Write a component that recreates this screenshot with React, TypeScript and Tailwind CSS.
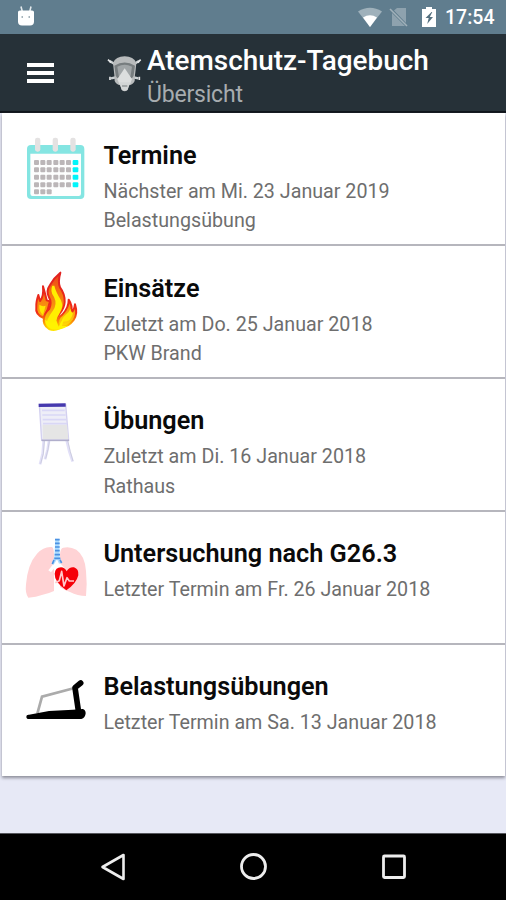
import type { ReactNode } from 'react'

interface Entry {
  title: string
  lines: string[]
  icon: ReactNode
}

function StatusBar() {
  return (
    <div className="flex h-[34px] items-center bg-[#607d8e] text-white">
      <svg className="mb-[2px] ml-[17px] h-[22px] w-[18px]" viewBox="0 0 18 22" fill="none">
        <path d="M4 1.500l1.500 6M14 1.500l-1.500 6" stroke="#e3e9ec" strokeWidth="1.600" />
        <path d="M1 7q0-1.500 2-1.500h12q2 0 2 1.500v9.500q0 4-4 4H5q-4 0-4-4z" fill="#fff" />
        <path d="M4.500 12h1.500M11.500 12h1.500" stroke="#8b9da7" strokeWidth="1.500" />
      </svg>
      <svg className="ml-auto h-[22px] w-[24px]" viewBox="0 0 24 22">
        <path d="M0 5.500Q12-2 24 5.500L12 21z" fill="#9fb1bb" />
        <path d="M5 11.500q7-4.500 14 0L12 21z" fill="#fff" />
      </svg>
      <svg className="ml-[7px] h-[22px] w-[20px]" viewBox="0 0 20 22" fill="none">
        <path d="M8 2h9v15L5 4.500zM3 7l13 13H3z" fill="#8ea2ae" />
        <path d="M1 3l17 17" stroke="#a1b1ba" strokeWidth="1.600" />
      </svg>
      <svg className="ml-[13px] h-[22px] w-[14px]" viewBox="0 0 14 22">
        <path d="M4 1h6v2h4v18H0V3h4z" fill="#fff" />
        <path d="M9.500 6L3.500 12h3.200l-1.500 6 5.800-7H7.800l2.500-5z" fill="#54707f" />
      </svg>
      <span className="ml-[9px] mr-[10px] mt-[2px] w-[51px] whitespace-nowrap text-[19.500px] font-medium leading-6">
        17:54
      </span>
    </div>
  )
}

function MaskIcon() {
  return (
    <svg className="h-[38px] w-[36px]" viewBox="0 0 108 114" fill="none">
      <path d="M8 18l16 10M96 18l-16 10M12 70l20-4M94 70l-20-4" stroke="#cbd0d2" strokeWidth="7" />
      <path d="M3 14l9 9M101 14l-9 9M9 65v10M97 65v10" stroke="#e4e6e7" strokeWidth="5" />
      <path d="M18 24Q26 4 53 4t35 20q-2 22-4 36l-1 18q-4 10-17 13l-5 15q-8 6-16 0l-5-15q-13-3-17-13l-1-18z" fill="#b8bbbc" />
      <path d="M22 32q31-19 62 0l-4 29q-2 9-12 11H38q-10-2-12-11z" fill="#777d7f" />
      <path d="M31 35q22-11 44 0l-4 26q-2 6-8 7H43q-6-1-8-7z" fill="#a0a5a7" />
      <path d="M53 40l22 32-6 16H37l-6-16z" fill="#dcdede" />
      <path d="M36 82h34l-8 22q-9 6-18 0z" fill="#d3d6d6" />
      <path d="M45 93h16" stroke="#999fa1" strokeWidth="5" />
    </svg>
  )
}

function Header() {
  return (
    <header className="flex h-[79px] border-b-2 border-[#10151b] bg-[#263138]">
      <div className="ml-[27px] mt-[29px] flex h-[20px] w-[26.500px] flex-col justify-between">
        <span className="h-[4px] bg-white" />
        <span className="h-[4px] bg-white" />
        <span className="h-[4px] bg-white" />
      </div>
      <div className="ml-[53px] mt-[21px]">
        <MaskIcon />
      </div>
      <div className="ml-[4.500px] mt-[9px] whitespace-nowrap">
        <h1 className="text-[27.900px] font-medium leading-[36px] text-white">Atemschutz-Tagebuch</h1>
        <p className="mt-px text-[23px] leading-[30px] tracking-[-0.2px] text-[#a7acaf]">Übersicht</p>
      </div>
    </header>
  )
}

function CalendarIcon() {
  return (
    <svg className="h-[90px] w-[88px]" viewBox="0 0 264 270">
      <rect x="36" y="60" width="172" height="162" rx="12" fill="#84e5e2" />
      <path d="M46 86h152v120q0 7-7 7H53q-7 0-7-7z" fill="#fdfefe" />
      {[68, 121, 174].map((x) => (
        <rect key={x} x={x - 8} y="38" width="16" height="42" rx="7" fill="#e4e2e2" />
      ))}
      {[113, 135, 157, 180, 201].map((y, row) =>
        [65, 84, 103, 123, 142, 161, 181].map((x, col) =>
          row === 4 && col > 2 ? null : (
            <rect
              key={`${x}-${y}`}
              x={x - 8}
              y={y - 8}
              width={col === 6 ? 17 : 15}
              height="15"
              rx="3"
              fill={col === 6 ? '#00f5fa' : '#bbb6b8'}
            />
          ),
        ),
      )}
    </svg>
  )
}

function FireIcon() {
  return (
    <svg className="h-[90px] w-[88px]" viewBox="0 0 264 270">
      <defs>
        <linearGradient id="flameEdge" x1="0" y1="40" x2="0" y2="218" gradientUnits="userSpaceOnUse">
          <stop offset="0" stopColor="#e02020" />
          <stop offset=".7" stopColor="#f02c18" />
          <stop offset=".9" stopColor="#ffb000" />
          <stop offset="1" stopColor="#ffe600" />
        </linearGradient>
        <linearGradient id="flameFill" x1="0" y1="40" x2="0" y2="218" gradientUnits="userSpaceOnUse">
          <stop offset="0" stopColor="#e83a20" />
          <stop offset=".3" stopColor="#f46a10" />
          <stop offset=".65" stopColor="#f99a10" />
          <stop offset="1" stopColor="#fff000" />
        </linearGradient>
      </defs>
      <g fill="url(#flameFill)" stroke="url(#flameEdge)" strokeWidth="6" strokeLinejoin="round">
        <path d="M86 180Q60 170 64 146q-1-14 6-35l5 18q12-14 9-44 7 24 11 42l10 3-7 25z" />
        <path d="M132 204q-8-22 10-34 20-22 19-45 12 18 8 38 9-7 11-24 9 28-4 47-15 20-32 20z" />
        <path d="M102 213Q82 200 87 180q1-14 16-28 8-19-1-34-10-19 3-37 12-22 31-37-8 28-1 44 15 20 14 44-1 18-15 35-12 17-4 40l2 5q-15 7-30 1z" />
      </g>
      <path d="M112 83q-8 16 5 34 11 22-4 42-20 27-18 42 13 18 32 8-9-22 6-42 14-20 5-40-16-26-20-44z" fill="#fff000" />
      <path d="M73 140q-2 20 11 31l8-28q-10 4-19-3zM140 192q0-12 12-22 12-10 14-18 4 14 8 12-4 20-17 26z" fill="#ffe800" />
      <path d="M90 185q2 24 22 29 28 4 46-11l-17 1 6-24q-10 12-16 26l-7-18q-13 14-34-3z" fill="#fff300" />
    </svg>
  )
}

function FlipchartIcon() {
  return (
    <svg className="h-[90px] w-[88px]" viewBox="0 0 264 270" fill="none">
      <path d="M86 150l-3 38-8 32M102 150l-4 25-8 30M155 148l8 34 10 30" stroke="#e2e0f8" strokeWidth="8" />
      <path d="M88 150l-3 38-8 30M103 151l-4 24-7 28M158 148l8 34 8 28" stroke="#c0c1d2" strokeWidth="2" />
      <path d="M73 40h79l9 108H80z" fill="#eeeef7" stroke="#d3d0f0" strokeWidth="4" />
      <path d="M83 101h73l4 43H84z" fill="#e5e5e5" />
      <path d="M81 58h68M82 72h70M83 86h71M84 98h72" stroke="#d9d7f6" strokeWidth="5" />
      <path d="M80 148h82" stroke="#b0aecb" strokeWidth="5" />
      <path d="M71 43l81-1" stroke="#4639ae" strokeWidth="10" />
    </svg>
  )
}

function LungsIcon() {
  return (
    <svg className="h-[90px] w-[88px]" viewBox="0 0 264 270" fill="none">
      <path d="M110 69Q86 67 66 89q-28 31-33 92-3 28 7 40 23-2 43-9 20-4 34-11V92q0-22-7-23z" fill="#ffd3d5" />
      <path d="M145 71q20-5 39 6 26 18 29 64 4 39 0 75-25 0-48-12-18-6-30-14V92q1-20 10-21z" fill="#ffd3d5" />
      <path d="M126 112v88M122 119l-18 23M130 119l18 20" stroke="#fff" strokeWidth="10" />
      <path d="M121 44h12l1 54 7 18-9 3-6-13-10 16-6-3 8-21z" fill="#aeddff" />
      <path d="M120 47h14M120 58h14M120 69h14M120 80h14M119 92h16M118 103h18M117 108l-5 12M135 108l5 9" stroke="#4b91e2" strokeWidth="5" />
      <path d="M154 199Q118 174 119 149q2-19 19-19 11 0 17 12 8-14 22-12 15 5 13 24-6 25-36 45z" fill="#f50008" />
      <path d="M121 176l12-6 7-28 7 44 9-25 7 10h14" stroke="#ffc9ca" strokeWidth="5" strokeLinejoin="round" />
    </svg>
  )
}

function TreadmillIcon() {
  return (
    <svg className="mt-[4px] h-[75px] w-[88px]" viewBox="0 0 264 225" fill="none">
      <path d="M67 158l14-51 95-25" stroke="#ababab" strokeWidth="8" />
      <path d="M42 161l60-11 72-4 29-2q9 2 9 13-1 14-13 17H42q-8 0-8-7t8-6z" fill="#000" />
      <path d="M191 155l-11-75 17-14" stroke="#000" strokeWidth="17" strokeLinecap="round" strokeLinejoin="round" />
    </svg>
  )
}

const entries: Entry[] = [
  {
    title: 'Termine',
    lines: ['Nächster am Mi. 23 Januar 2019', 'Belastungsübung'],
    icon: <CalendarIcon />,
  },
  {
    title: 'Einsätze',
    lines: ['Zuletzt am Do. 25 Januar 2018', 'PKW Brand'],
    icon: <FireIcon />,
  },
  {
    title: 'Übungen',
    lines: ['Zuletzt am Di. 16 Januar 2018', 'Rathaus'],
    icon: <FlipchartIcon />,
  },
  {
    title: 'Untersuchung nach G26.3',
    lines: ['Letzter Termin am Fr. 26 Januar 2018'],
    icon: <LungsIcon />,
  },
  {
    title: 'Belastungsübungen',
    lines: ['Letzter Termin am Sa. 13 Januar 2018'],
    icon: <TreadmillIcon />,
  },
]

function EntryCard({ entry }: { entry: Entry }) {
  return (
    <li className="flex flex-1 border-b-2 border-[#b6b6bd] bg-white pl-[13px] last:border-b-0">
      <div className="mt-[12px] shrink-0">{entry.icon}</div>
      <div className="ml-[0.4px] mt-[27.600px] whitespace-nowrap">
        <h2 className="text-[25.250px] font-semibold leading-[30px] text-[#0a0a0a]">{entry.title}</h2>
        <div className="mt-[6px] text-[#6e6e6e]">
          {entry.lines.map((line) => (
            <p key={line} className="text-[19.700px] leading-[29.500px]">
              {line}
            </p>
          ))}
        </div>
      </div>
    </li>
  )
}

function NavBar() {
  return (
    <nav className="flex h-[67px] items-center justify-between border-t border-[#55565c] bg-black pl-[100px] pr-[98px]">
      <svg className="h-[30px] w-[27px]" viewBox="0 0 27 30" fill="none">
        <path d="M2.500 15L23.500 3v24z" stroke="#ededed" strokeWidth="2.600" strokeLinejoin="round" />
      </svg>
      <svg className="h-[30px] w-[30px]" viewBox="0 0 30 30" fill="none">
        <circle cx="14.500" cy="14.500" r="12" stroke="#ededed" strokeWidth="2.800" />
      </svg>
      <svg className="h-[30px] w-[28px]" viewBox="0 0 28 30" fill="none">
        <rect x="3.500" y="4" width="21" height="21.500" rx="1" stroke="#ededed" strokeWidth="2.800" />
      </svg>
    </nav>
  )
}

export default function App() {
  return (
    <div className="flex h-[900px] w-[506px] flex-col overflow-hidden bg-[#e7e9f6] font-['Roboto',sans-serif]">
      <StatusBar />
      <Header />
      <main className="flex-1">
        <ul className="ml-[2px] mr-px flex h-[662.500px] flex-col bg-white shadow-[0_2px_3px_#8d8d98]">
          {entries.map((entry) => (
            <EntryCard key={entry.title} entry={entry} />
          ))}
        </ul>
      </main>
      <NavBar />
    </div>
  )
}
